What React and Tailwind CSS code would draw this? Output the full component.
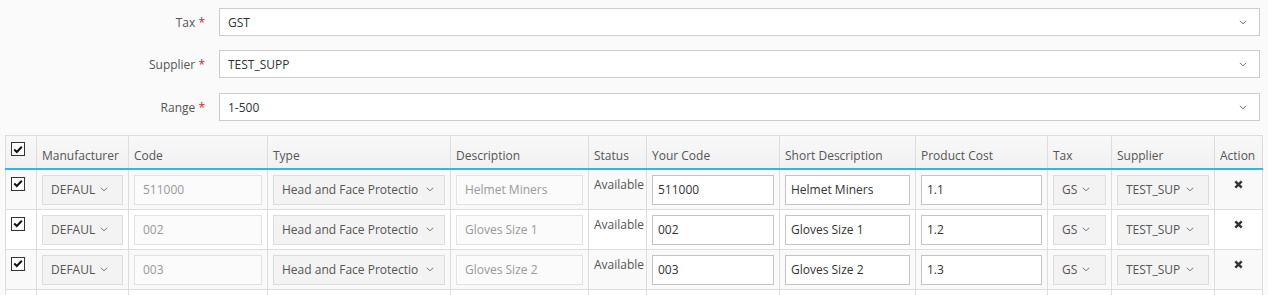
const cols = [
  { label: '', w: 31 },
  { label: 'Manufacturer', w: 92 },
  { label: 'Code', w: 139 },
  { label: 'Type', w: 183 },
  { label: 'Description', w: 138 },
  { label: 'Status', w: 58 },
  { label: 'Your Code', w: 133 },
  { label: 'Short Description', w: 136 },
  { label: 'Product Cost', w: 132 },
  { label: 'Tax', w: 64 },
  { label: 'Supplier', w: 103 },
  { label: 'Action', w: 48 },
];

const rows = [
  { code: '511000', desc: 'Helmet Miners', cost: '1.1' },
  { code: '002', desc: 'Gloves Size 1', cost: '1.2' },
  { code: '003', desc: 'Gloves Size 2', cost: '1.3' },
];

const Chevron = ({ className = '' }) => (
  <svg className={className} width="8" height="5" viewBox="0 0 8 5" fill="none">
    <path d="M0.8 0.8L4 3.8L7.2 0.8" stroke="#777" strokeWidth="1" />
  </svg>
);

const CheckBox = () => (
  <span className="flex w-[14px] h-[14px] border border-[#333] bg-white items-center justify-center">
    <svg width="10" height="9" viewBox="0 0 10 9">
      <path d="M1.2 4.6L3.8 7L8.8 1.8" stroke="#111" strokeWidth="2" fill="none" />
    </svg>
  </span>
);

const FormRow = ({ label, value, className = '' }) => (
  <div className={`flex items-center h-[28px] ${className}`}>
    <div className="w-[205px] text-right text-[#555]">
      {label} <span className="text-[#e02020]">*</span>
    </div>
    <div className="ml-[14px] flex-1 h-full bg-white border border-[#ccc] flex items-center justify-between pl-[8px] pr-[12px] text-[#333]">
      <span>{value}</span>
      <Chevron />
    </div>
  </div>
);

const SelectBox = ({ value, chevronPad = 'pr-[14px]' }) => (
  <div className={`h-[30px] bg-[#f3f3f3] border border-[#ddd] flex items-center justify-between pl-[8px] ${chevronPad} text-[#555] whitespace-nowrap`}>
    <span>{value}</span>
    <Chevron className="shrink-0 ml-[4px]" />
  </div>
);

const ReadInput = ({ value }) => (
  <div className="h-[30px] bg-[#fbfbfb] border border-[#e2e2e2] flex items-center px-[8px] text-[#999] whitespace-nowrap">
    {value}
  </div>
);

const EditInput = ({ value, error }) => (
  <div className={`h-[30px] bg-white border ${error ? 'border-[#c0392b]' : 'border-[#c4c4c4]'} flex items-center px-[5px] text-[#333] whitespace-nowrap`}>
    {value}
  </div>
);

const Cell = ({ children }) => (
  <td className="border border-[#ddd] px-[5px] pt-[5px] pb-[4px]">{children}</td>
);

export default function App() {
  return (
    <div className="min-h-screen bg-[#fafafa] text-[12px] leading-[17px] pt-[8px]" style={{ fontFamily: '"Open Sans", "Liberation Sans", sans-serif' }}>
      <div className="pr-[8px]">
        <FormRow label="Tax" value="GST" className="mb-[14px]" />
        <FormRow label="Supplier" value="TEST_SUPP" className="mb-[15px]" />
        <FormRow label="Range" value="1-500" />
      </div>

      <div className="mt-[14px] ml-[5px] mr-[6px]">
        <table className="table-fixed border-collapse w-[1257px] bg-white">
          <colgroup>
            {cols.map((c, i) => (
              <col key={i} style={{ width: c.w }} />
            ))}
          </colgroup>
          <thead>
            <tr className="h-[33px] bg-gradient-to-b from-[#f8f8f8] to-[#f1f1f1]">
              {cols.map((c, i) => (
                <th
                  key={i}
                  className={`border border-[#ddd] border-b-2 border-b-[#29bbe6] font-normal text-left text-[#555] px-[5px] whitespace-nowrap ${i === 0 ? 'align-top pt-[6px]' : 'align-bottom pb-[4px]'}`}
                >
                  {i === 0 ? <CheckBox /> : c.label}
                </th>
              ))}
            </tr>
          </thead>
          <tbody>
            {rows.map((r, idx) => (
              <tr key={idx} className={`h-[40px] ${idx % 2 === 0 ? 'bg-[#f9f9f9]' : 'bg-white'}`}>
                <td className="border border-[#ddd] align-top pt-[7px] px-[5px]">
                  <CheckBox />
                </td>
                <Cell><SelectBox value="DEFAUL" /></Cell>
                <Cell><ReadInput value={r.code} /></Cell>
                <Cell><SelectBox value="Head and Face Protectio" chevronPad="pr-[10px]" /></Cell>
                <Cell><ReadInput value={r.desc} /></Cell>
                <td className="border border-[#ddd] align-top pt-[6px] px-[5px] text-[#555]">Available</td>
                <Cell><EditInput value={r.code} /></Cell>
                <Cell><EditInput value={r.desc} /></Cell>
                <Cell><EditInput value={r.cost} /></Cell>
                <Cell><SelectBox value="GS" chevronPad="pr-[15px]" /></Cell>
                <Cell><SelectBox value="TEST_SUP" chevronPad="pr-[14px]" /></Cell>
                <td className="border border-[#ddd] align-top pt-[10px]">
                  <svg className="block mx-auto" width="9" height="9" viewBox="0 0 9 9">
                    <path d="M1.3 1.3L7.7 7.7M7.7 1.3L1.3 7.7" stroke="#333" strokeWidth="2.4" />
                  </svg>
                </td>
              </tr>
            ))}
            <tr className="h-[40px] bg-white">
              <td className="border border-[#ddd]" />
              <Cell><SelectBox value="" /></Cell>
              <Cell><ReadInput value="" /></Cell>
              <Cell><SelectBox value="" /></Cell>
              <Cell><ReadInput value="" /></Cell>
              <td className="border border-[#ddd]" />
              <Cell><EditInput value="" /></Cell>
              <Cell><EditInput value="" /></Cell>
              <Cell><EditInput value="" error /></Cell>
              <Cell><SelectBox value="" /></Cell>
              <Cell><SelectBox value="" /></Cell>
              <td className="border border-[#ddd]" />
            </tr>
          </tbody>
        </table>
      </div>
    </div>
  );
}
